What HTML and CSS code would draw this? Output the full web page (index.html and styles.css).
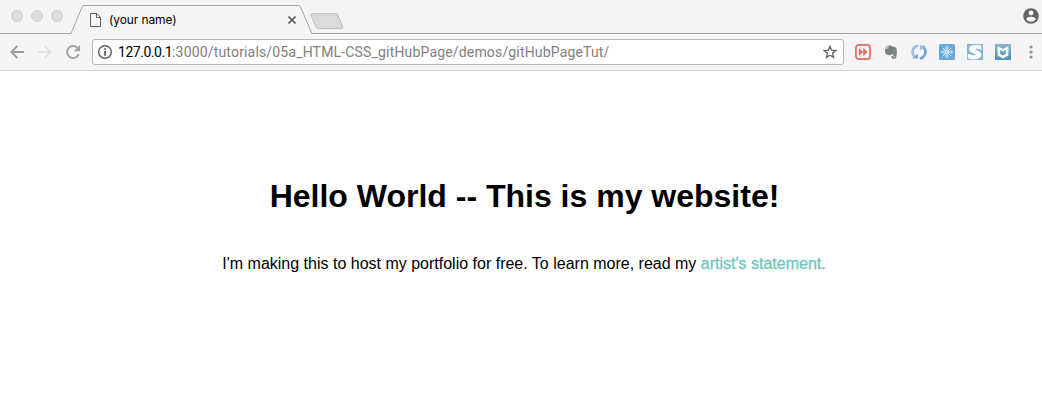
FILE: index.html
```html
<!DOCTYPE html>
<html lang="en">
<head>
<meta charset="utf-8">
<title>(your name)</title>
<link rel="stylesheet" href="styles.css">
</head>
<body>
<header class="browser">
  <div class="tab-strip">
    <div class="window-controls"><i class="dot"></i><i class="dot"></i><i class="dot"></i></div>
    <div class="tab">
      <svg class="tab-shape" width="244" height="34" viewBox="0 0 244 34"><path d="M0 34V33.5H1L12.2 6.8Q12.8 5.5 14 5.5H228.5Q229.8 5.5 230.4 6.8L242 33.5H244V34Z" fill="#f5f5f5"/><path d="M0 33.5H1L12.2 6.8Q12.8 5.5 14 5.5H228.5Q229.8 5.5 230.4 6.8L242 33.5H244" fill="none" stroke="#a5a4a5"/></svg>
      <svg class="page-icon" width="12" height="14" viewBox="0 0 12 14" fill="none" stroke="#626262"><path d="M.5.5H6.8L10.5 4.4V13.5H.5ZM6.5.8V4.5H10.4"/></svg>
      <span class="tab-title">(your name)</span>
      <svg class="tab-close" width="8" height="8" viewBox="0 0 8 8" stroke="#5c5c5c" stroke-width="1.6"><path d="M.5.5 7.5 7.5M7.5.5.5 7.5"/></svg>
    </div>
    <svg class="new-tab" width="34" height="17" viewBox="0 0 34 17"><path d="M2.5.7H26Q27.3.7 27.9 2L32.8 13.8Q33.3 15.6 31.5 15.6H8.2Q6.8 15.6 6.2 14.3L.8 2.2Q.4.7 2.5.7Z" fill="#dcdbdc" stroke="#bdbcbd"/></svg>
    <svg class="profile" width="16" height="16" viewBox="0 0 16 16"><circle cx="8" cy="8" r="7.8" fill="#626262"/><circle cx="8" cy="5" r="2.4" fill="#f5f5f5"/><path d="M3.2 11.3C3.3 9.4 6 8.7 8 8.7s4.7.7 4.8 2.6C11.6 13 10 13.8 8 13.8S4.4 13 3.2 11.3Z" fill="#f5f5f5"/></svg>
  </div>
  <div class="toolbar">
    <svg width="14" height="14" viewBox="0 0 14 14" fill="none" stroke="#999" stroke-width="1.8"><path d="M14 7H1.5M7.5.8 1.3 7l6.2 6.2"/></svg>
    <svg width="14" height="14" viewBox="0 0 14 14" fill="none" stroke="#e2e2e2" stroke-width="1.8"><path d="M0 7h12.5M6.5.8 12.7 7l-6.2 6.2"/></svg>
    <svg width="14" height="14" viewBox="0 0 14 14"><path d="M11.4 2.8A6 6 0 1 0 12.8 9" fill="none" stroke="#a0a0a0" stroke-width="1.9"/><path d="M14 0V6.2H7.8Z" fill="#a0a0a0"/></svg>
    <div class="address">
      <svg width="14" height="14" viewBox="0 0 14 14"><circle cx="7" cy="7" r="6.3" fill="none" stroke="#5c5c5c" stroke-width="1.4"/><path d="M6.2 3.2h1.7v1.6H6.2ZM6.2 6h1.7v4.7H6.2Z" fill="#555"/></svg>
      <span class="url"><b class="host">127.0.0.1</b>:3000/tutorials/05a_HTML-CSS_gitHubPage/demos/gitHubPageTut/</span>
      <svg class="star" width="14" height="14" viewBox="0 0 14 14"><path d="M7 1.4 8.6 5.2 12.8 5.6 9.6 8.3 10.6 12.4 7 10.2 3.4 12.4 4.4 8.3 1.2 5.6 5.4 5.2Z" fill="none" stroke="#606060" stroke-width="1.3"/></svg>
    </div>
    <div class="extensions">
      <svg width="16" height="16" viewBox="0 0 16 16"><rect x=".9" y=".9" width="14.2" height="14.2" rx="2.8" fill="#f8eeed" stroke="#d8716c" stroke-width="1.7"/><path d="M4 4 8 8 4 12ZM8.2 4 12.6 8 8.2 12Z" fill="#d8716c"/></svg>
      <svg width="16" height="16" viewBox="0 0 16 16"><path d="M2.2 4.4H4.8Q5.3 4.4 5.3 3.8V1.6Q6.7.8 8.3 1.7L9 2.5 12 3Q13.5 3.4 13.6 5 14.4 9 13.3 13 12.6 15.3 10.4 15 8.4 14.8 8.5 12.8 8.7 11.2 10.8 11.4V12.7Q9.9 12.7 10 13.4 11.1 14 11.5 12.8 11.6 10.8 9.5 10.2 8.6 9.5 8.3 10.5 7.5 11.5 5.8 11.1 2.8 11.1 2.3 8.8 1.6 6.2 2.2 4.4Z" fill="#788083"/><path d="m2 3.7 2.6-2.5v2.5Z" fill="#909698"/><path d="M10.5 7.3Q10.9 5.6 12.3 7.4Z" fill="#e3e5e5"/></svg>
      <svg width="16" height="16" viewBox="0 0 16 16"><path d="M7.2 1.5A6.6 6.6 0 0 0 3.9 13" fill="none" stroke="#a0bce8" stroke-width="2.7"/><path d="M1 14.6H7V9.6Z" fill="#7ba6e3"/><path d="M8.8 14.5A6.6 6.6 0 0 0 12.1 3" fill="none" stroke="#76a2df" stroke-width="2.7"/><path d="M15 1.4H9V6.4Z" fill="#9cb9e6"/></svg>
      <svg width="16" height="16" viewBox="0 0 16 16"><rect width="16" height="16" rx="1.5" fill="#63a9df"/><g stroke="#f2f9fe"><path d="M8 2V6.8M8 9.2V14M2 8H6.8M9.2 8H14M3.9 3.9 7.1 7.1M8.9 8.9 12.1 12.1M12.1 3.9 8.9 7.1M7.1 8.9 3.9 12.1"/><path d="M5.8 2.6 10.2 13.4M10.2 2.6 5.8 13.4M2.6 5.8 13.4 10.2M13.4 5.8 2.6 10.2" stroke-width=".4"/></g></svg>
      <svg width="16" height="16" viewBox="0 0 16 16"><path d="M0 0H16V16H0Z" fill="#83b4d3"/><path d="M14.5 1.5Q7-.3 2.8 2.5.3 6 4.3 8.5L8 10Q9.2 10.8 7.8 11.1 5.5 11.4.8 9.8V14.6Q9 16.8 13.3 13.5 16.1 9.2 11.8 6.9L8.8 5.8Q7.8 5 9 4.9 10.5 4.6 14.5 6Z" fill="#fbfdfd"/></svg>
      <svg width="16" height="16" viewBox="0 0 16 16"><defs><linearGradient id="shield-back" x2="0" y2="1"><stop stop-color="#8fb5cb"/><stop offset="1" stop-color="#4f91b4"/></linearGradient></defs><path d="M0 0H16V16H0Z" fill="url(#shield-back)"/><path d="M2.6 2.3 8 5 13.4 2.3V11.4L8 14.5 2.6 11.4ZM5.1 6V9.8L8 11.5 10.9 9.8V6L8 7.5Z" fill="#f3f9fb" fill-rule="evenodd"/></svg>
    </div>
    <svg class="menu" width="4" height="14" viewBox="0 0 4 14" fill="#909090"><circle cx="2" cy="2" r="1.6"/><circle cx="2" cy="7" r="1.6"/><circle cx="2" cy="12" r="1.6"/></svg>
  </div>
</header>
<main class="page">
  <h1 class="headline">Hello World -- This is my website!</h1>
  <p class="intro">I'm making this to host my portfolio for free. To learn more, read my <a class="statement" href="#">artist's statement.</a></p>
</main>
</body>
</html>
```
FILE: styles.css
```css
* { box-sizing: border-box; }
body { margin: 0; height: 406px; overflow: hidden; background: #fff; color: #000; font-family: "Liberation Sans", Arial, sans-serif; }
svg { display: block; flex: none; }
.browser { background: #f5f5f5; height: 71px; border-bottom: 1px solid #d2d1d2; }
.tab-strip { display: flex; height: 34px; background: linear-gradient(#a5a4a5, #a5a4a5) bottom / 100% 1px no-repeat; }
.window-controls { display: flex; gap: 8px; padding: 10px 0 0 11px; width: 70px; }
.dot { width: 12px; height: 12px; border: 1px solid #d0cfd0; border-radius: 50%; background: #dddcdd; }
.tab { position: relative; display: flex; align-items: center; width: 244px; padding: 6px 18px 0 20px; }
.tab-shape { position: absolute; left: 0; top: 0; }
.page-icon, .tab-title, .tab-close { position: relative; }
.tab-title { flex: 1; margin-left: 7px; font: 12px/16px Inter, sans-serif; letter-spacing: -.1px; }
.new-tab { margin: 13px 0 0 -4px; }
.profile { margin: 8px 3px 0 auto; }
.toolbar { display: flex; align-items: center; height: 36px; padding: 0 9px 0 10px; gap: 14px; }
.address { display: flex; align-items: center; width: 752px; height: 26px; margin-left: -2px; padding: 0 6px 0 5px; border: 1px solid #b7b6b7; border-radius: 3px; background: #fff; }
.url { flex: 1; margin-left: 6px; color: #808080; font: 14px/20px Roboto, sans-serif; letter-spacing: .17px; white-space: nowrap; }
.host { color: #000; font-weight: 400; letter-spacing: -.47px; }
.extensions { display: flex; gap: 12px; margin-left: -3px; }
.menu { margin-left: auto; }
.page { padding-top: 107px; padding-left: 6px; text-align: center; }
.headline { margin: 0; padding-left: 1px; font-size: 32px; line-height: 37px; white-space: nowrap; }
.intro { margin: 40px 0 0; font-size: 16px; line-height: 18px; white-space: nowrap; }
.statement { color: #70c7b9; text-decoration: none; -webkit-text-stroke: .3px #70c7b9; }
```
